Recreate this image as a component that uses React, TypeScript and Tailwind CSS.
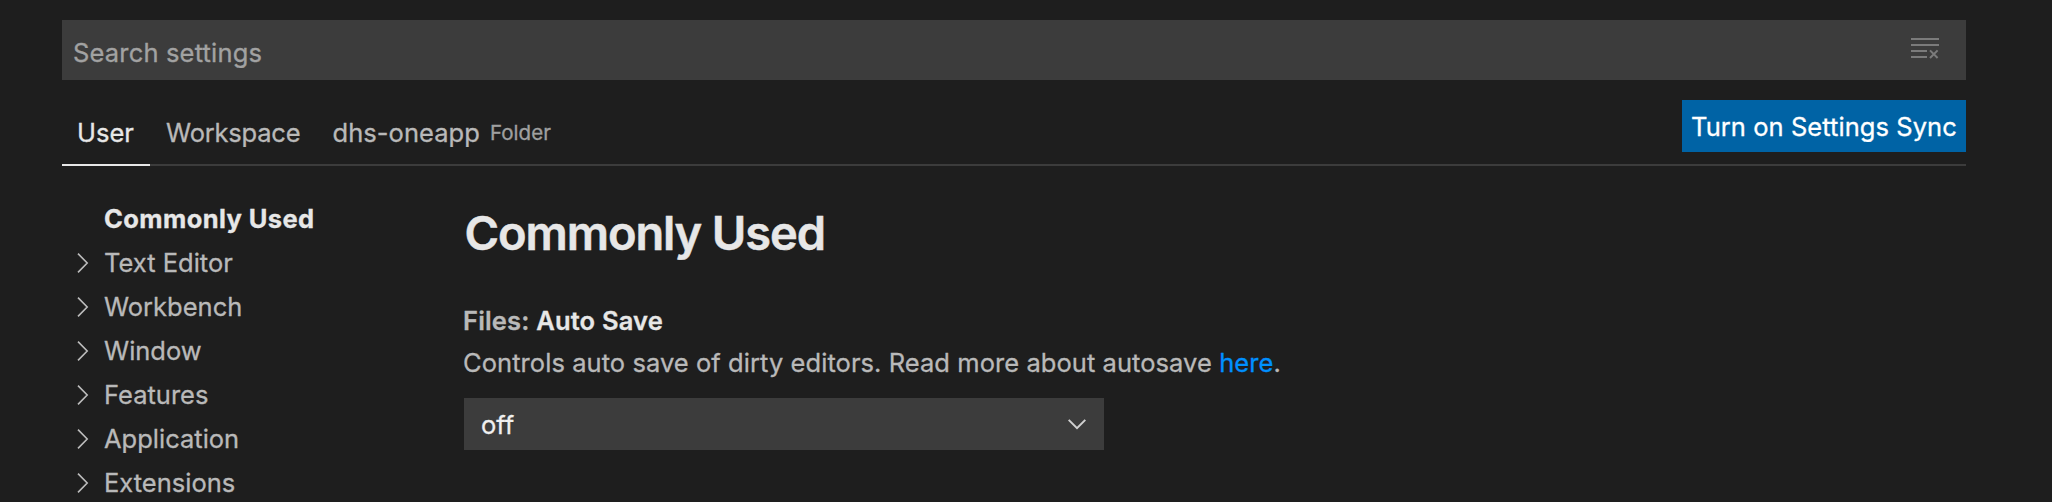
const sections = ["Text Editor", "Workbench", "Window", "Features", "Application", "Extensions"];

function ClearIcon() {
  return (
    <svg width="28" height="22" viewBox="0 0 28 22" fill="none" stroke="#7b7b7b" strokeWidth="2">
      <path d="M0 1H28M0 7H28M0 13H16M0 19H16" />
      <path d="M19 12.4L26.6 20M26.6 12.4L19 20" />
    </svg>
  );
}

function ChevronRight() {
  return (
    <svg width="12" height="22" viewBox="0 0 12 22" fill="none" stroke="#bcbcbc" strokeWidth="1.6">
      <path d="M1 1.6L10.2 11L1 20.4" />
    </svg>
  );
}

function ChevronDown() {
  return (
    <svg width="18" height="11" viewBox="0 0 18 11" fill="none" stroke="#d0d0d0" strokeWidth="2">
      <path d="M0.7 0.9L9 9.2L17.3 0.9" />
    </svg>
  );
}

export default function App() {
  return (
    <div className="h-[502px] w-[2052px] overflow-hidden bg-[#1e1e1e] pl-[62px] pr-[86px] pt-5 font-['Inter',sans-serif] text-[25.5px] text-[#b9b9b9] [-webkit-text-stroke:0.3px]">
      <div className="flex h-[60px] items-start justify-between bg-[#3c3c3c] pl-[11px] pr-[27px]">
        <span className="pt-[3px] leading-[60px] tracking-[0.17px] text-[#a2a2a2]">Search settings</span>
        <div className="pt-[18px]"><ClearIcon /></div>
      </div>
      <div className="mt-5 flex h-[66px] items-start justify-between border-b-2 border-[#3c3c3c]">
        <div className="flex h-[66px] leading-[66px]">
          <div className="w-[88px] border-b-2 border-[#e7e7e7] pl-[15px] text-[#e7e7e7]">User</div>
          <div className="w-[166px] pl-4 tracking-[-0.2px]">Workspace</div>
          <div className="flex pl-[16.5px] tracking-[0.05px]">
            <span>dhs-oneapp</span>
            <span className="pl-[10px] text-[20.5px] text-[#a0a0a0]">Folder</span>
          </div>
        </div>
        <button className="h-[52px] w-[284px] whitespace-nowrap bg-[#0063a5] pl-[9px] pt-px text-left leading-[52px] tracking-[0.06px] text-white">
          Turn on Settings Sync
        </button>
      </div>
      <div className="flex pt-[31px]">
        <nav className="w-[402px] leading-[44px]">
          <div className="h-11 pl-[42px] font-bold tracking-[0.4px] text-[#e7e7e7]">Commonly Used</div>
          {sections.map((s) => (
            <div key={s} className="flex h-11 items-center">
              <div className="w-[42px] pl-[15px]"><ChevronRight /></div>
              <span>{s}</span>
            </div>
          ))}
        </nav>
        <main>
          <h1 className="mt-2 h-14 pl-[0.5px] text-[47px] font-semibold leading-[56px] tracking-[-1.12px] text-[#e7e7e7] [-webkit-text-stroke:0.5px]">Commonly Used</h1>
          <div className="-ml-px mt-10 h-10 font-semibold leading-10 tracking-[0.17px]">
            Files: <span className="text-[#e7e7e7]">Auto Save</span>
          </div>
          <p className="-ml-px h-11 leading-[44px] tracking-[0.06px]">
            Controls auto save of dirty editors. Read more about autosave <a className="text-[#0090ff]">here</a>.
          </p>
          <div className="mt-[13px] flex h-[52px] w-[640px] items-center justify-between bg-[#3c3c3c] pl-[17px] pr-[18px] text-[#f0f0f0]">
            <span className="pt-0.5">off</span>
            <ChevronDown />
          </div>
        </main>
      </div>
    </div>
  );
}
